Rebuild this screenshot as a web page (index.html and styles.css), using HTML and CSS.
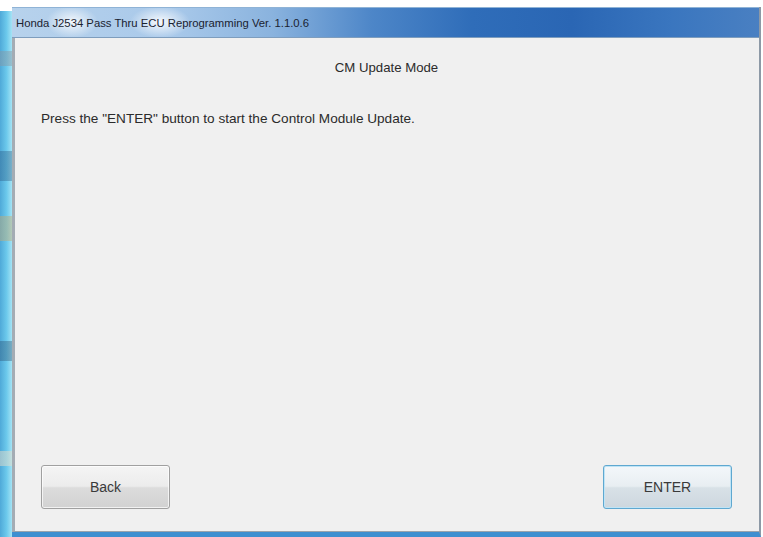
FILE: index.html
```html
<!DOCTYPE html>
<html lang="en">
<head>
<meta charset="utf-8">
<title>Honda J2534 Pass Thru ECU Reprogramming</title>
<link rel="stylesheet" href="styles.css">
</head>
<body>
<div class="screen">
  <div class="desktop-edge"></div>
  <div class="window">
    <div class="titlebar">
      <span class="title">Honda J2534 Pass Thru ECU Reprogramming Ver. 1.1.0.6</span>
    </div>
    <div class="client">
      <h1 class="heading">CM Update Mode</h1>
      <p class="message">Press the "ENTER" button to start the Control Module Update.</p>
      <div class="actions">
        <button class="btn" type="button">Back</button>
        <button class="btn btn-default" type="button">ENTER</button>
      </div>
    </div>
  </div>
</div>
</body>
</html>
```
FILE: styles.css
```css
html, body {
  margin: 0;
  padding: 0;
  background: #ffffff;
}

.screen {
  width: 763px;
  height: 537px;
  display: flex;
  padding-top: 7px;
  padding-right: 2px;
  box-sizing: border-box;
  overflow: hidden;
  background: #ffffff;
}

/* desktop showing through the left glass frame */
.desktop-edge {
  width: 12px;
  flex: none;
  margin-top: 4px;
  background:
    linear-gradient(180deg, transparent 0 40px, rgba(140,150,160,0.45) 40px 55px, transparent 55px 140px, rgba(40,80,120,0.35) 140px 170px, transparent 170px 205px, rgba(200,170,110,0.45) 205px 230px, transparent 230px 330px, rgba(40,70,100,0.35) 330px 350px, transparent 350px 440px, rgba(230,220,200,0.5) 440px 455px, transparent 455px),
    linear-gradient(90deg, #4fa9d8 0, #6cc9ec 55%, #a4e3f4 100%);
}

.window {
  flex: 1;
  display: flex;
  flex-direction: column;
  border-right: 2px solid #8d99a6;
  border-bottom: 5px solid #3e8fd0;
  box-sizing: border-box;
}

.titlebar {
  height: 28px;
  flex: none;
  display: flex;
  align-items: center;
  padding-left: 4px;
  padding-top: 1px;
  border-top: 1px solid #8fb3d6;
  border-bottom: 1px solid #7e9dbd;
  background:
    radial-gradient(ellipse 26px 16px at 60px 14px, rgba(255,255,255,0.85), rgba(255,255,255,0) 100%),
    radial-gradient(ellipse 30px 16px at 148px 14px, rgba(255,255,255,0.9), rgba(255,255,255,0) 100%),
    linear-gradient(90deg, #b7d2ec 0, #a9c9ea 160px, #8ab3de 260px, #4d86c8 360px, #2f6db9 460px, #2a66b4 560px, #3a76bf 660px, #4a80c2 749px);
}

.title {
  font-family: "Liberation Sans", Arial, sans-serif;
  font-size: 11.3px;
  color: #1a2230;
  white-space: nowrap;
}

.client {
  flex: 1;
  display: flex;
  flex-direction: column;
  background: #f0f0f0;
  border-left: 3px solid #a4acb4;
  border-bottom: 1px solid #9aa3ac;
  padding: 0 27px 0 26px;
}

.heading {
  margin: 22px 0 0;
  text-align: center;
  font-family: "Liberation Sans", Arial, sans-serif;
  font-size: 13.2px;
  font-weight: normal;
  color: #2b2b2b;
  line-height: 16px;
}

.message {
  margin: 35px 0 0;
  font-family: "Liberation Sans", Arial, sans-serif;
  font-size: 13.6px;
  color: #2b2b2b;
  line-height: 16px;
}

.actions {
  margin-top: auto;
  margin-bottom: 22px;
  display: flex;
  justify-content: space-between;
}

.btn {
  width: 129px;
  height: 44px;
  border: 1px solid #a0a0a0;
  border-radius: 3px;
  background: linear-gradient(180deg, #f4f4f4 0, #ececec 48%, #dcdcdc 52%, #d2d2d2 100%);
  box-shadow: inset 0 0 0 1px rgba(255,255,255,0.7);
  font-family: "Liberation Sans", Arial, sans-serif;
  font-size: 14px;
  color: #3a3a3a;
  padding: 0;
}

.btn-default {
  border-color: #5fa8d0;
  box-shadow: inset 0 0 0 1px #bfe4f6;
  background: linear-gradient(180deg, #f3f7fa 0, #e8eef2 48%, #d8e1e7 52%, #cdd7de 100%);
}
```
